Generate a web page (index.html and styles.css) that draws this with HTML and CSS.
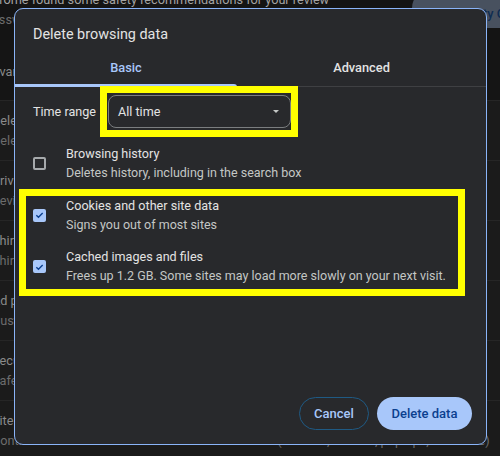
FILE: index.html
```html
<!DOCTYPE html>
<html lang="en">
<head>
  <meta charset="UTF-8" />
  <meta name="viewport" content="width=device-width, initial-scale=1" />
  <title>Delete browsing data</title>
  <link rel="stylesheet" href="styles.css">
</head>
<body>
  <!-- settings page behind the dialog -->
  <div class="page">
    <div class="card">
      <div class="card-text">
        <div class="line">Chrome found some safety recommendations for your review</div>
        <div class="line dim">Passwords, extensions and site permissions</div>
      </div>
      <div class="tonal-btn">Go to Safety Check</div>
    </div>
    <div class="row first">
      <div class="line">Advanced</div>
    </div>
    <div class="row">
      <div class="line">Delete browsing data</div>
      <div class="line dim">Delete history, cookies, cache, and more</div>
    </div>
    <div class="row">
      <div class="line">Privacy Guide</div>
      <div class="line dim">Review key privacy and security controls</div>
    </div>
    <div class="row">
      <div class="line">Third-party cookies</div>
      <div class="line dim">Third-party cookies are blocked in Incognito mode</div>
    </div>
    <div class="row">
      <div class="line">Ad privacy</div>
      <div class="line dim">Customize the info used by sites to show you ads</div>
    </div>
    <div class="row">
      <div class="line">Security</div>
      <div class="line dim">Safe Browsing (protection from dangerous sites) and other security settings</div>
    </div>
    <div class="row">
      <div class="line">Site settings</div>
      <div class="line dim">Controls what information sites can use and show (location, camera, pop-ups, and more)</div>
    </div>
  </div>

  <div class="dialog">
    <div class="dialog-title">Delete browsing data</div>

    <div class="tabs">
      <div class="tab active">Basic</div>
      <div class="tab">Advanced</div>
    </div>

    <div class="dialog-body">
      <div class="range">
        <span class="range-label">Time range</span>
        <div class="select">
          <span>All time</span>
          <span class="arrow"></span>
        </div>
      </div>

      <div class="options">
        <div class="option">
          <span class="checkbox"></span>
          <div class="option-text">
            <div class="option-title">Browsing history</div>
            <div class="option-sub">Deletes history, including in the search box</div>
          </div>
        </div>
        <div class="option">
          <span class="checkbox checked">
            <svg viewBox="0 0 14 14" width="14" height="14"><path d="M3.6 7.2l2.3 2.2 4.5-4.6" fill="none" stroke="#0b3f8f" stroke-width="1.5"/></svg>
          </span>
          <div class="option-text">
            <div class="option-title">Cookies and other site data</div>
            <div class="option-sub">Signs you out of most sites</div>
          </div>
        </div>
        <div class="option">
          <span class="checkbox checked">
            <svg viewBox="0 0 14 14" width="14" height="14"><path d="M3.6 7.2l2.3 2.2 4.5-4.6" fill="none" stroke="#0b3f8f" stroke-width="1.5"/></svg>
          </span>
          <div class="option-text">
            <div class="option-title">Cached images and files</div>
            <div class="option-sub">Frees up 1.2 GB. Some sites may load more slowly on your next visit.</div>
          </div>
        </div>
      </div>
    </div>

    <div class="dialog-actions">
      <button class="btn outline">Cancel</button>
      <button class="btn filled">Delete data</button>
    </div>
  </div>

  <!-- annotation boxes drawn over the screenshot -->
  <div class="mark mark-range"></div>
  <div class="mark mark-options"></div>
</body>
</html>
```

FILE: styles.css
```css
* {
  box-sizing: border-box;
}

body {
  margin: 0;
  width: 500px;
  height: 456px;
  overflow: hidden;
  background-color: #141414;
  font-family: Roboto, "Noto Sans", sans-serif;
  font-size: 13px;
  color: #e3e3e3;
  position: relative;
}

/* background page */
.page {
  color: #8a8a8a;
  font-size: 12.7px;
  line-height: 20px;
  white-space: nowrap;
}

.line.dim {
  color: #6c6c6c;
}

.card {
  display: flex;
  align-items: flex-start;
  margin-top: -10px;
  height: 50px;
}

.card-text {
  flex: 1;
  margin-left: -16px;
}

.card-text .line:first-child {
  color: #a3a3a3;
}

.tonal-btn {
  width: 120px;
  height: 38px;
  margin-right: -32px;
  padding: 0 12px;
  border-radius: 18px;
  background-color: #48515f;
  color: #0f2c52;
  line-height: 48px;
  font-weight: 500;
}

.row {
  height: 60px;
  padding: 10px 0 10px 0;
  text-indent: -8px;
  background-color: #1b1b1b;
  border-top: 1px solid #262626;
}

.row.first {
  background-color: #151515;
  border-top: none;
  padding-top: 22px;
  text-indent: -16px;
}

/* dialog */
.dialog {
  position: absolute;
  left: 14px;
  top: 8px;
  width: 473px;
  height: 437px;
  display: flex;
  flex-direction: column;
  background-color: #28292c;
  border: 1px solid #8ab4f8;
  border-radius: 9px;
}

.dialog-title {
  padding: 16px 18px 0;
  font-size: 14.4px;
  line-height: 20px;
  color: #e3e3e3;
}

.tabs {
  display: flex;
  margin-top: 5px;
  border-bottom: 1px solid #3f4043;
}

.tab {
  flex: 1;
  height: 36px;
  line-height: 36px;
  text-align: center;
  font-size: 12.8px;
  font-weight: 500;
  color: #e3e3e3;
  position: relative;
}

.tab.active {
  flex: 0 0 222px;
  color: #a8c7fa;
}

.tab.active::after {
  content: "";
  position: absolute;
  left: 0;
  right: 0;
  bottom: -1px;
  height: 3px;
  background-color: #a8c7fa;
  border-radius: 0 3px 0 0;
}

.dialog-body {
  padding: 8px 18px 0;
  font-size: 12.6px;
}

.range {
  display: flex;
  align-items: center;
}

.range-label {
  width: 75px;
}

.select {
  width: 183px;
  height: 33px;
  display: flex;
  align-items: center;
  justify-content: space-between;
  padding: 0 11px 0 9px;
  border: 1px solid #7b7e80;
  border-radius: 8px;
}

.arrow {
  width: 0;
  height: 0;
  border-left: 3px solid transparent;
  border-right: 3px solid transparent;
  border-top: 3px solid #c4c7c5;
}

.options {
  margin-top: 10px;
}

.option {
  display: flex;
  align-items: center;
  gap: 20px;
  padding: 7px 0;
}

.checkbox {
  width: 13px;
  height: 13px;
  flex: none;
  border: 2px solid #a6a9ac;
  border-radius: 2px;
  display: flex;
  align-items: center;
  justify-content: center;
}

.checkbox.checked {
  border: none;
  background-color: #a8c7fa;
}

.option-title {
  line-height: 18px;
  color: #e3e3e3;
}

.option-sub {
  font-size: 12.5px;
  line-height: 19.5px;
  color: #c4c7c5;
}

.dialog-actions {
  margin-top: auto;
  display: flex;
  justify-content: flex-end;
  gap: 8px;
  padding: 0 14px 14px;
}

.btn {
  height: 33px;
  border-radius: 17px;
  font-family: inherit;
  font-size: 13px;
  font-weight: 500;
  cursor: pointer;
}

.btn.outline {
  width: 70px;
  background: none;
  border: 1px solid #1f5a84;
  color: #a8c7fa;
}

.btn.filled {
  width: 95px;
  border: none;
  background-color: #a8c7fa;
  color: #0b3f8f;
}

/* yellow annotation frames */
.mark {
  position: absolute;
  border: 7px solid #ffff00;
}

.mark-range {
  left: 100px;
  top: 86px;
  width: 198px;
  height: 51px;
}

.mark-options {
  left: 19px;
  top: 189px;
  width: 446px;
  height: 107px;
}
```
